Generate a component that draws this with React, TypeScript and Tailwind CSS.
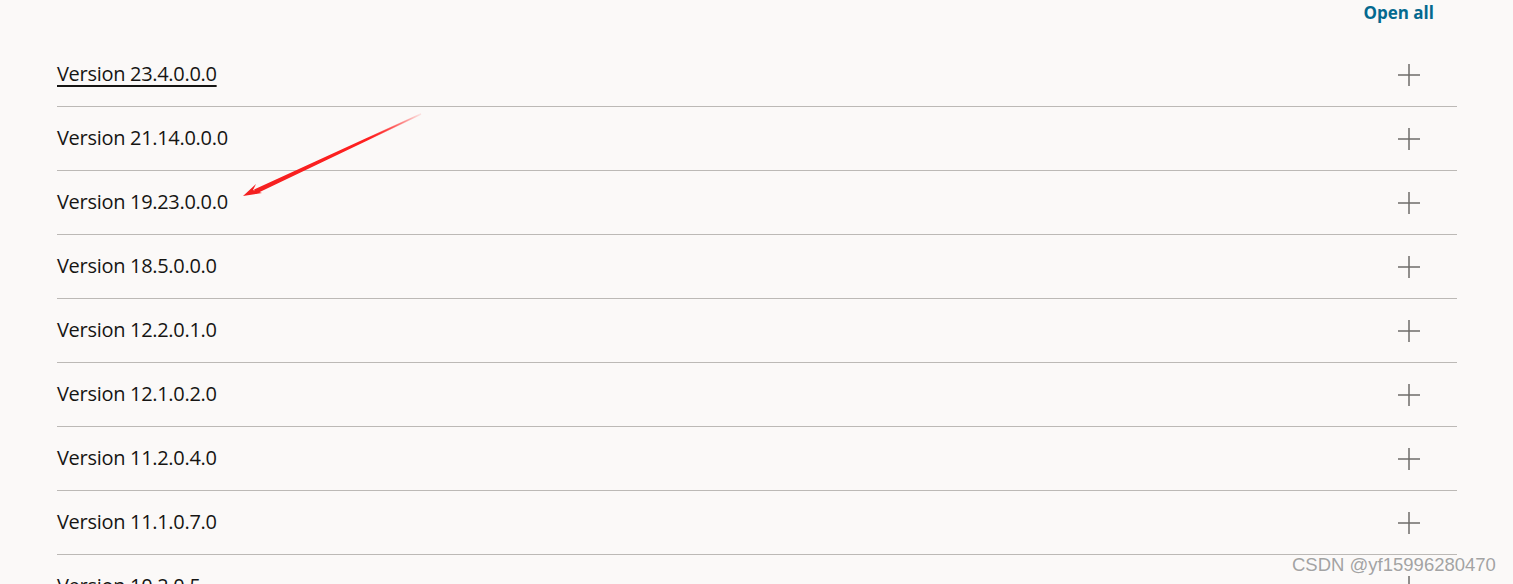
import React from "react";

const versions = [
  "Version 23.4.0.0.0",
  "Version 21.14.0.0.0",
  "Version 19.23.0.0.0",
  "Version 18.5.0.0.0",
  "Version 12.2.0.1.0",
  "Version 12.1.0.2.0",
  "Version 11.2.0.4.0",
  "Version 11.1.0.7.0",
  "Version 10.2.0.5",
];

const Plus = () => (
  <svg width="24" height="24" viewBox="0 0 24 24" className="text-[#6f6c69]">
    <path d="M12 1v22M1 12h22" stroke="currentColor" strokeWidth="1.5" fill="none" />
  </svg>
);

export default function App() {
  return (
    <div
      className="relative h-[584px] w-[1513px] overflow-hidden bg-[#fbf9f8] text-[#161513]"
      style={{ fontFamily: "'Open Sans', 'Noto Sans', sans-serif" }}
    >
      <div className="pl-[57px] pr-[56px]">
        <div className="flex h-[43px] justify-end pr-[23px]">
          <button className="h-[26px] text-[17px] font-bold leading-[26px] text-[#04698f]">
            Open all
          </button>
        </div>
        {versions.map((v, i) => (
          <div
            key={v}
            className="flex h-[64px] items-center justify-between border-b border-[#bcb9b6] pr-[36px]"
          >
            <span
              className={
                "mb-[2px] text-[20px] tracking-[-0.3px] " +
                (i === 0 ? "underline underline-offset-[4px]" : "")
              }
            >
              {v}
            </span>
            <Plus />
          </div>
        ))}
      </div>

      <svg
        className="pointer-events-none absolute left-0 top-0"
        width="1513"
        height="584"
        viewBox="0 0 1513 584"
      >
        <defs>
          <linearGradient id="g" x1="420" y1="115" x2="243" y2="196" gradientUnits="userSpaceOnUse">
            <stop offset="0" stopColor="#ff0000" stopOpacity="0.1" />
            <stop offset="0.3" stopColor="#ff2020" stopOpacity="1" />
            <stop offset="1" stopColor="#f42020" />
          </linearGradient>
        </defs>
        <path d="M421 114 L255 190 L256 193 Z" fill="url(#g)" stroke="url(#g)" strokeWidth="1.5" />
        <path d="M243 196 L256 184 L253 190 L262 193 Z" fill="#f42020" />
      </svg>

      <div
        className="absolute left-[1292px] top-[553px] text-[18.5px] leading-[24px] text-[#a3a3a3]"
        style={{ fontFamily: "'Liberation Sans', Arial, sans-serif", textShadow: "0 0 2px #fff" }}
      >
        CSDN @yf15996280470
      </div>
    </div>
  );
}
